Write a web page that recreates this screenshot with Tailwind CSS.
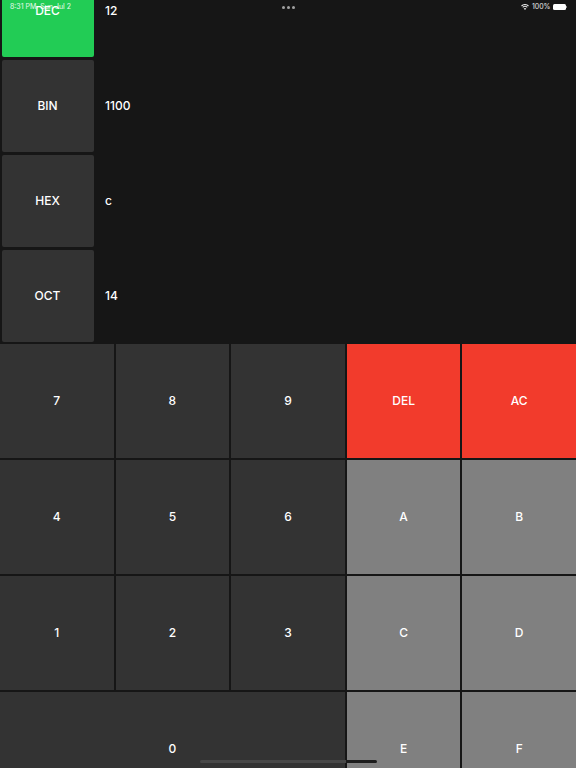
<!DOCTYPE html>
<html lang="en">
<head>
    <meta charset="UTF-8">
    <title>Base Calculator</title>
    <script src="https://cdn.jsdelivr.net/npm/@tailwindcss/browser@4"></script>
</head>
<body class="bg-[#161616]">
    <div class="relative w-[576px] h-[768px] overflow-hidden bg-[#161616] font-['Inter','Liberation_Sans',sans-serif] text-white">

        <!-- Status bar -->
        <div class="absolute top-0 left-0 w-full h-[14px] z-10 text-[7px] text-white/90">
            <span class="absolute left-[10px] top-[3px] leading-[8px]">8:31 PM&nbsp;&nbsp;Sun Jul 2</span>
            <div class="absolute left-[282px] top-[6px] flex gap-[2px]">
                <span class="w-[3px] h-[3px] rounded-full bg-white/60"></span>
                <span class="w-[3px] h-[3px] rounded-full bg-white/60"></span>
                <span class="w-[3px] h-[3px] rounded-full bg-white/60"></span>
            </div>
            <div class="absolute right-[9px] top-[3px] flex items-center">
                <svg width="8" height="6" viewBox="0 0 18 14" fill="white" fill-opacity="0.9">
                    <path d="M9 14 L6 10.5 A4.5 4.5 0 0 1 12 10.5 Z"/>
                    <path d="M4.4 8.6 L3 7 A9 9 0 0 1 15 7 L13.6 8.6 A7 7 0 0 0 4.4 8.6 Z"/>
                    <path d="M1.8 5.6 L0 3.6 A13 13 0 0 1 18 3.6 L16.2 5.6 A10.5 10.5 0 0 0 1.8 5.6 Z"/>
                </svg>
                <span class="ml-[2.5px] leading-[8px]">100%</span>
                <div class="ml-[2px] flex items-center">
                    <div class="w-[13px] h-[6px] rounded-[1.5px] bg-white"></div>
                    <div class="w-[1px] h-[2px] bg-white/50 ml-[0.5px]"></div>
                </div>
            </div>
        </div>

        <!-- Conversion rows -->
        <div class="h-[344px] flex flex-col justify-end gap-[3px] pb-[2px] overflow-hidden">
            <div class="flex items-center shrink-0">
                <button class="w-[92px] h-[92px] ml-[1.5px] rounded-[2px] bg-[#22cc55] text-[12px] font-medium">DEC</button>
                <span class="ml-[11.5px] text-[12px] font-medium">12</span>
            </div>
            <div class="flex items-center shrink-0">
                <button class="w-[92px] h-[92px] ml-[1.5px] rounded-[2px] bg-[#333333] text-[12px] font-medium">BIN</button>
                <span class="ml-[11.5px] text-[12px] font-medium">1100</span>
            </div>
            <div class="flex items-center shrink-0">
                <button class="w-[92px] h-[92px] ml-[1.5px] rounded-[2px] bg-[#333333] text-[12px] font-medium">HEX</button>
                <span class="ml-[11.5px] text-[12px] font-medium">c</span>
            </div>
            <div class="flex items-center shrink-0">
                <button class="w-[92px] h-[92px] ml-[1.5px] rounded-[2px] bg-[#333333] text-[12px] font-medium">OCT</button>
                <span class="ml-[11.5px] text-[12px] font-medium">14</span>
            </div>
        </div>

        <!-- Keypad -->
        <div class="grid grid-cols-5 auto-rows-[114px] gap-[2px] text-[12px] font-medium">
            <button class="bg-[#333333]">7</button>
            <button class="bg-[#333333]">8</button>
            <button class="bg-[#333333]">9</button>
            <button class="bg-[#f23b2c]">DEL</button>
            <button class="bg-[#f23b2c]">AC</button>

            <button class="bg-[#333333]">4</button>
            <button class="bg-[#333333]">5</button>
            <button class="bg-[#333333]">6</button>
            <button class="bg-[#808080]">A</button>
            <button class="bg-[#808080]">B</button>

            <button class="bg-[#333333]">1</button>
            <button class="bg-[#333333]">2</button>
            <button class="bg-[#333333]">3</button>
            <button class="bg-[#808080]">C</button>
            <button class="bg-[#808080]">D</button>

            <button class="col-span-3 bg-[#333333]">0</button>
            <button class="bg-[#808080]">E</button>
            <button class="bg-[#808080]">F</button>
        </div>

        <!-- Home indicator -->
        <div class="absolute left-[200px] top-[760px] w-[177px] h-[3px] rounded-full overflow-hidden flex">
            <div class="w-[146px] bg-[#484848]"></div>
            <div class="flex-1 bg-[#1c1c1c]"></div>
        </div>
    </div>
</body>
</html>
